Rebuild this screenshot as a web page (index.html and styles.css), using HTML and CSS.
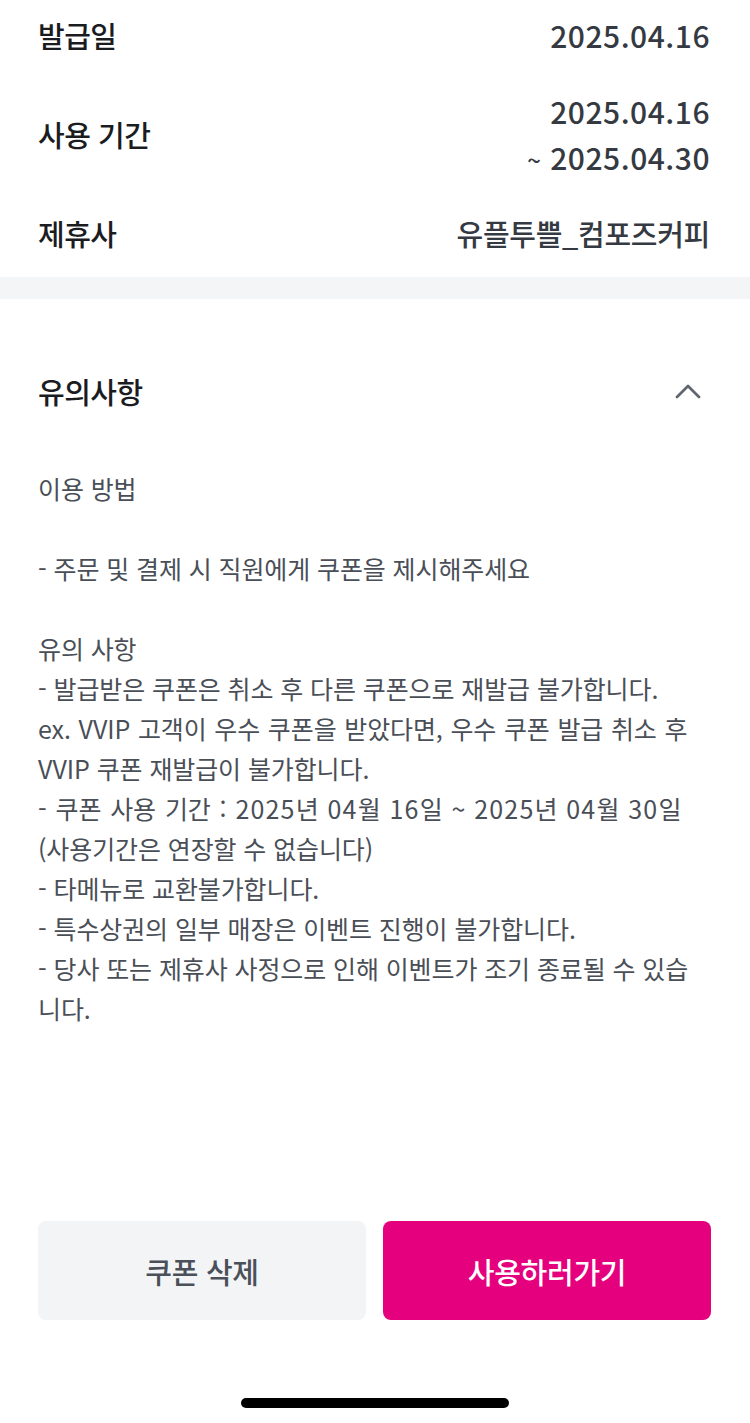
FILE: index.html
```html
<!DOCTYPE html>
<html lang="ko">
<head>
<meta charset="utf-8">
<link rel="stylesheet" href="styles.css">
</head>
<body>
<div class="page">
  <section class="info">
    <div class="row">
      <div class="label">발급일</div>
      <div class="value num">2025.04.16</div>
    </div>
    <div class="row">
      <div class="label">사용 기간</div>
      <div class="value num"><div>2025.04.16</div><div><span class="tilde">~</span> 2025.04.30</div></div>
    </div>
    <div class="row">
      <div class="label">제휴사</div>
      <div class="value">유플투쁠_컴포즈커피</div>
    </div>
  </section>
  <div class="band"></div>
  <section class="notes">
    <div class="notes-head">
      <div class="notes-title">유의사항</div>
      <svg class="chev" width="28" height="20" viewBox="0 0 28 20"><polyline points="3,16 14,5 25,16" fill="none" stroke="#5f6670" stroke-width="2.8" stroke-linecap="round" stroke-linejoin="round"/></svg>
    </div>
    <div class="notes-body">
      <div class="ln">이용 방법</div>
      <div class="ln">&nbsp;</div>
      <div class="ln">- 주문 및 결제 시 직원에게 쿠폰을 제시해주세요</div>
      <div class="ln">&nbsp;</div>
      <div class="ln">유의 사항</div>
      <div class="ln">- 발급받은 쿠폰은 취소 후 다른 쿠폰으로 재발급 불가합니다.</div>
      <div class="ln wide">ex. VVIP 고객이 우수 쿠폰을 받았다면, 우수 쿠폰 발급 취소 후</div>
      <div class="ln">VVIP 쿠폰 재발급이 불가합니다.</div>
      <div class="ln date">- 쿠폰 사용 기간 : <span class="d">2025</span>년 <span class="d">04</span>월 <span class="d">16</span>일 ~ <span class="d">2025</span>년 <span class="d">04</span>월 <span class="d">30</span>일</div>
      <div class="ln">(사용기간은 연장할 수 없습니다)</div>
      <div class="ln">- 타메뉴로 교환불가합니다.</div>
      <div class="ln">- 특수상권의 일부 매장은 이벤트 진행이 불가합니다.</div>
      <div class="ln">- 당사 또는 제휴사 사정으로 인해 이벤트가 조기 종료될 수 있습</div>
      <div class="ln">니다.</div>
    </div>
  </section>
  <footer class="footer">
    <div class="buttons">
      <button class="btn btn-gray">쿠폰 삭제</button>
      <button class="btn btn-pink">사용하러가기</button>
    </div>
    <div class="home-bar"></div>
  </footer>
</div>
</body>
</html>
```
FILE: styles.css
```css
* { box-sizing: border-box; }
html, body { margin: 0; padding: 0; background: #fff; }
body {
  font-family: "Noto Sans CJK KR", "Noto Sans", sans-serif;
  width: 750px;
}
.page {
  display: flex;
  flex-direction: column;
  height: 1423px;
}
.info {
  display: flex;
  flex-direction: column;
  gap: 30px;
  padding: 12px 40px 21px 38px;
}
.row {
  display: flex;
  justify-content: space-between;
  align-items: center;
}
.label {
  font-size: 29px;
  font-weight: 500;
  color: #1b1c1f;
  line-height: 46px;
  letter-spacing: -0.5px;
}
.value {
  font-size: 29px;
  font-weight: 500;
  color: #353a42;
  line-height: 46px;
  text-align: right;
  letter-spacing: -0.3px;
}
.value.num {
  font-size: 30px;
  letter-spacing: 0.5px;
}
.tilde { font-size: 24px; line-height: 0; }
.band {
  height: 22px;
  background: #f4f5f7;
}
.notes {
  padding: 72px 40px 0 38px;
}
.notes-head {
  display: flex;
  justify-content: space-between;
  align-items: center;
  height: 40px;
}
.notes-title {
  font-size: 29px;
  font-weight: 500;
  color: #1b1c1f;
  letter-spacing: -0.5px;
}
.chev { margin-right: 8px; }
.notes-body {
  margin-top: 57px;
  font-size: 25px;
  color: #4a4f57;
  line-height: 40px;
  letter-spacing: -0.1px;
}
.ln { white-space: nowrap; }
.ln.wide { word-spacing: 0.8px; }
.ln.date { word-spacing: 2px; }
.ln.date .d { letter-spacing: 1.2px; }
.footer {
  margin-top: auto;
  padding: 0 39px 15px 38px;
}
.buttons {
  display: flex;
  gap: 17px;
}
.btn {
  flex: 1;
  height: 99px;
  border: none;
  border-radius: 8px;
  font-family: "Noto Sans CJK KR", "Noto Sans", sans-serif;
  font-size: 29px;
  font-weight: 500;
  letter-spacing: -0.3px;
}
.btn-gray { background: #f3f4f6; color: #4a505a; }
.btn-pink { background: #e5007d; color: #fff; }
.home-bar {
  width: 268px;
  height: 10px;
  border-radius: 5px;
  background: #000;
  margin: 78px auto 0;
}
```
